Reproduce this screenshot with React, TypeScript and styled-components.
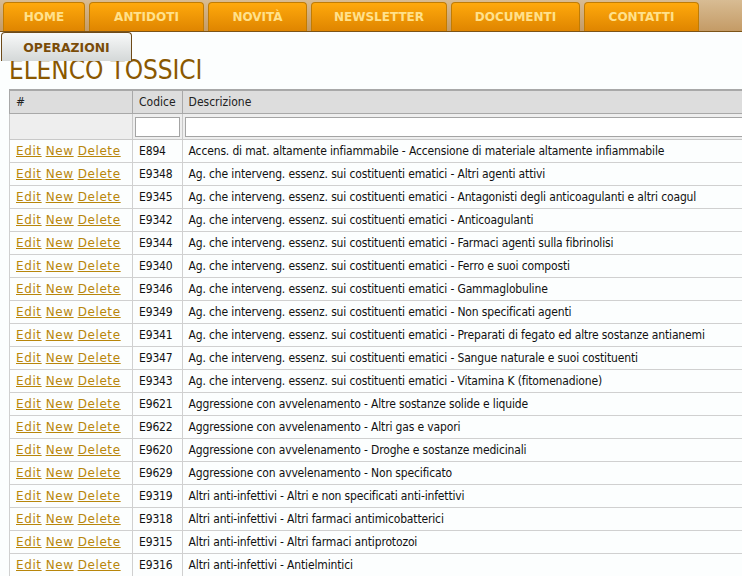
import React from "react";
import styled, { createGlobalStyle } from "styled-components";

const Global = createGlobalStyle`
  html, body { margin: 0; padding: 0; overflow: hidden; background: #fcfefe; }
  body { font-family: "DejaVu Sans Condensed", "Liberation Sans", sans-serif; }
`;

const TopBar = styled.nav`
  display: flex;
  gap: 4px;
  height: 32px;
  box-sizing: border-box;
  padding: 2px 0 0 3px;
  background: linear-gradient(#d8bc93, #c49b66);
  border-bottom: 1px solid #7c5418;
`;

const Tab = styled.a<{ $w: number }>`
  display: flex;
  align-items: center;
  justify-content: center;
  box-sizing: border-box;
  width: ${(p) => p.$w}px;
  height: 29px;
  border: 1px solid #c07c04;
  border-bottom: none;
  border-radius: 4px 4px 0 0;
  background: linear-gradient(#ffa90c, #df8500);
  color: #ffe18c;
  font: bold 12px "DejaVu Sans", Verdana, sans-serif;
  text-decoration: none;
`;

const SubBar = styled.div`
  display: flex;
  height: 30px;
  padding-left: 1px;
  position: relative;
  z-index: 1;
`;

const SubTab = styled.a`
  display: flex;
  align-items: center;
  justify-content: center;
  box-sizing: border-box;
  width: 131px;
  height: 29px;
  border: 1px solid #6d4a18;
  border-bottom: none;
  border-radius: 4px 4px 0 0;
  background: linear-gradient(#f8f9f9, #d4d8d8);
  color: #7a4c08;
  font: bold 12.4px "DejaVu Sans", Verdana, sans-serif;
  text-decoration: none;
`;

const Content = styled.main`
  padding: 0 0 0 9px;
`;

const Title = styled.h1`
  margin: -7px 0 0 0;
  font: normal 26px/30px "DejaVu Sans Condensed", "Liberation Sans", sans-serif;
  letter-spacing: -0.1px;
  color: #8a5800;
`;

const Table = styled.table`
  margin-top: 4px;
  border-collapse: collapse;
  width: 1000px;
  font-size: 12px;
  color: #111;
`;

const HeadCell = styled.th<{ $w?: number }>`
  height: 22px;
  padding: 0 6px;
  text-align: left;
  font-weight: normal;
  color: #222;
  background: #dddddd;
  border: 1px solid #a8a8a8;
  border-top-width: 2px;
  ${(p) => (p.$w ? `width: ${p.$w}px;` : "")}
`;

const FilterCell = styled.td`
  height: 25px;
  padding: 0 2px;
  background: #eeeeee;
  border: 1px solid #c8c8c8;
  border-top-color: #a8a8a8;
`;

const FilterInput = styled.input`
  display: block;
  box-sizing: border-box;
  width: 100%;
  height: 20px;
  margin: 0;
  border: 1px solid #a4a4a4;
  background: #fff;
`;

const Cell = styled.td`
  height: 22px;
  padding: 0 6px;
  border: 1px solid #d0d0d0;
  white-space: nowrap;
  letter-spacing: -0.15px;
`;

const Links = styled.div`
  display: flex;
  gap: 4px;
`;

const ActionLink = styled.a`
  font: 12px "DejaVu Sans", Verdana, sans-serif;
  letter-spacing: 0.6px;
  color: #b8860b;
  text-decoration: underline;
`;

const tabs: [string, number][] = [
  ["HOME", 82],
  ["ANTIDOTI", 115],
  ["NOVITÀ", 99],
  ["NEWSLETTER", 136],
  ["DOCUMENTI", 129],
  ["CONTATTI", 115],
];

const AG = "Ag. che interveng. essenz. sui costituenti ematici - ";
const AV = "Aggressione con avvelenamento - ";
const AI = "Altri anti-infettivi - ";

const rows: [string, string][] = [
  ["E894", "Accens. di mat. altamente infiammabile - Accensione di materiale altamente infiammabile"],
  ["E9348", AG + "Altri agenti attivi"],
  ["E9345", AG + "Antagonisti degli anticoagulanti e altri coagul"],
  ["E9342", AG + "Anticoagulanti"],
  ["E9344", AG + "Farmaci agenti sulla fibrinolisi"],
  ["E9340", AG + "Ferro e suoi composti"],
  ["E9346", AG + "Gammaglobuline"],
  ["E9349", AG + "Non specificati agenti"],
  ["E9341", AG + "Preparati di fegato ed altre sostanze antianemi"],
  ["E9347", AG + "Sangue naturale e suoi costituenti"],
  ["E9343", AG + "Vitamina K (fitomenadione)"],
  ["E9621", AV + "Altre sostanze solide e liquide"],
  ["E9622", AV + "Altri gas e vapori"],
  ["E9620", AV + "Droghe e sostanze medicinali"],
  ["E9629", AV + "Non specificato"],
  ["E9319", AI + "Altri e non specificati anti-infettivi"],
  ["E9318", AI + "Altri farmaci antimicobatterici"],
  ["E9315", AI + "Altri farmaci antiprotozoi"],
  ["E9316", AI + "Antielmintici"],
];

export default function App() {
  return (
    <>
      <Global />
      <TopBar>
        {tabs.map(([label, w]) => (
          <Tab key={label} $w={w} href="#">
            {label}
          </Tab>
        ))}
      </TopBar>
      <SubBar>
        <SubTab href="#">OPERAZIONI</SubTab>
      </SubBar>
      <Content>
        <Title>ELENCO TOSSICI</Title>
        <Table>
          <thead>
            <tr>
              <HeadCell $w={110}>#</HeadCell>
              <HeadCell $w={35}>Codice</HeadCell>
              <HeadCell>Descrizione</HeadCell>
            </tr>
            <tr>
              <FilterCell />
              <FilterCell>
                <FilterInput />
              </FilterCell>
              <FilterCell>
                <FilterInput />
              </FilterCell>
            </tr>
          </thead>
          <tbody>
            {rows.map(([code, desc]) => (
              <tr key={code}>
                <Cell>
                  <Links>
                    <ActionLink href="#">Edit</ActionLink>
                    <ActionLink href="#">New</ActionLink>
                    <ActionLink href="#">Delete</ActionLink>
                  </Links>
                </Cell>
                <Cell>{code}</Cell>
                <Cell>{desc}</Cell>
              </tr>
            ))}
          </tbody>
        </Table>
      </Content>
    </>
  );
}
